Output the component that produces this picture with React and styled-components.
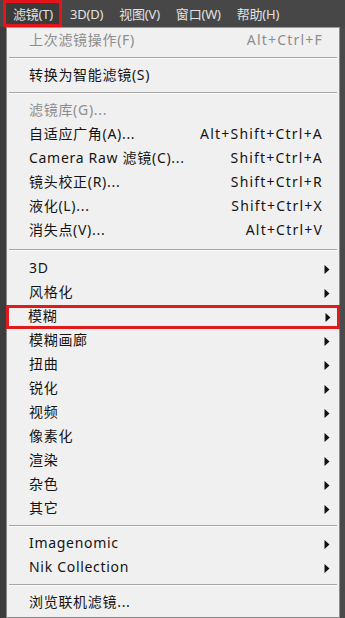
import React from "react";
import styled, { createGlobalStyle } from "styled-components";

const GlobalStyle = createGlobalStyle`
  html, body {
    margin: 0;
    padding: 0;
    background: #434343;
  }
  body {
    font-family: "Noto Sans", "Noto Sans CJK SC", sans-serif;
  }
`;

const Screen = styled.div`
  width: 345px;
  height: 618px;
  overflow: hidden;
  background: linear-gradient(to right, #3c3c3c 0, #3c3c3c 6px, #4a4a4a 340px);
`;

const MenuBar = styled.div`
  display: flex;
  height: 27px;
  background: #474747;
  padding-left: 3px;
`;

const BarItem = styled.div`
  display: flex;
  align-items: center;
  padding: ${props => (props.active ? "0 9px 0 10px" : "0 8px")};
  font-size: 13px;
  letter-spacing: -0.2px;
  color: #e2e2e2;
  background: ${props => (props.active ? "#3b3b3b" : "transparent")};
  box-shadow: ${props => (props.active ? "inset 0 0 0 3px #e3151a" : "none")};
`;

const Panel = styled.div`
  margin-left: 6px;
  width: 332px;
  height: 588px;
  background: #f0f0f0;
  border: 1px solid #8a8a8a;
  border-top-color: #9a9a9a;
  padding-top: 1px;
`;

const Row = styled.div`
  display: flex;
  align-items: center;
  height: 24px;
  padding: 0 9px 0 22px;
  margin: 0 ${props => (props.marked ? "-1px" : "0")};
  font-size: 14px;
  color: ${props => (props.disabled ? "#8d8d8d" : "#141414")};
  box-shadow: ${props => (props.marked ? "inset 0 0 0 3px #df1b1b" : "none")};
`;

const Label = styled.span`
  flex: 1;
  white-space: nowrap;
  letter-spacing: 0.7px;
  line-height: 24px;
  margin-top: -2px;
`;

const Shortcut = styled.span`
  margin-right: 7px;
  white-space: nowrap;
  letter-spacing: 1.2px;
  line-height: 24px;
  margin-top: -2px;
`;

const Separator = styled.div`
  height: ${props => props.size || 11}px;
  box-sizing: border-box;
  padding: ${props => props.offset || 4}px 2px 0;
  &::before {
    content: "";
    display: block;
    height: 1px;
    background: #a6a6a6;
    border-bottom: 1px solid #fbfbfb;
  }
`;

const Arrow = () => (
  <svg width="6" height="9" viewBox="0 0 6 9">
    <polygon points="0.5,0 5.5,4.5 0.5,9" fill="#111" />
  </svg>
);

const bar = ["滤镜(T)", "3D(D)", "视图(V)", "窗口(W)", "帮助(H)"];

const Item = ({ label, shortcut, sub, disabled, marked }) => (
  <Row disabled={disabled} marked={marked}>
    <Label>{label}</Label>
    {shortcut && <Shortcut>{shortcut}</Shortcut>}
    {sub && <Arrow />}
  </Row>
);

const subMenus = [
  "3D",
  "风格化",
  "模糊",
  "模糊画廊",
  "扭曲",
  "锐化",
  "视频",
  "像素化",
  "渲染",
  "杂色",
  "其它",
];

export default function App() {
  return (
    <Screen>
      <GlobalStyle />
      <MenuBar>
        {bar.map((t, i) => (
          <BarItem key={t} active={i === 0}>
            {t}
          </BarItem>
        ))}
      </MenuBar>
      <Panel>
        <Item label="上次滤镜操作(F)" shortcut="Alt+Ctrl+F" disabled />
        <Separator />
        <Item label="转换为智能滤镜(S)" />
        <Separator />
        <Item label="滤镜库(G)..." disabled />
        <Item label="自适应广角(A)..." shortcut="Alt+Shift+Ctrl+A" />
        <Item label="Camera Raw 滤镜(C)..." shortcut="Shift+Ctrl+A" />
        <Item label="镜头校正(R)..." shortcut="Shift+Ctrl+R" />
        <Item label="液化(L)..." shortcut="Shift+Ctrl+X" />
        <Item label="消失点(V)..." shortcut="Alt+Ctrl+V" />
        <Separator size={14} offset={6} />
        {subMenus.map(s => (
          <Item key={s} label={s} sub marked={s === "模糊"} />
        ))}
        <Separator />
        <Item label="Imagenomic" sub />
        <Item label="Nik Collection" sub />
        <Separator />
        <Item label="浏览联机滤镜..." />
      </Panel>
    </Screen>
  );
}
